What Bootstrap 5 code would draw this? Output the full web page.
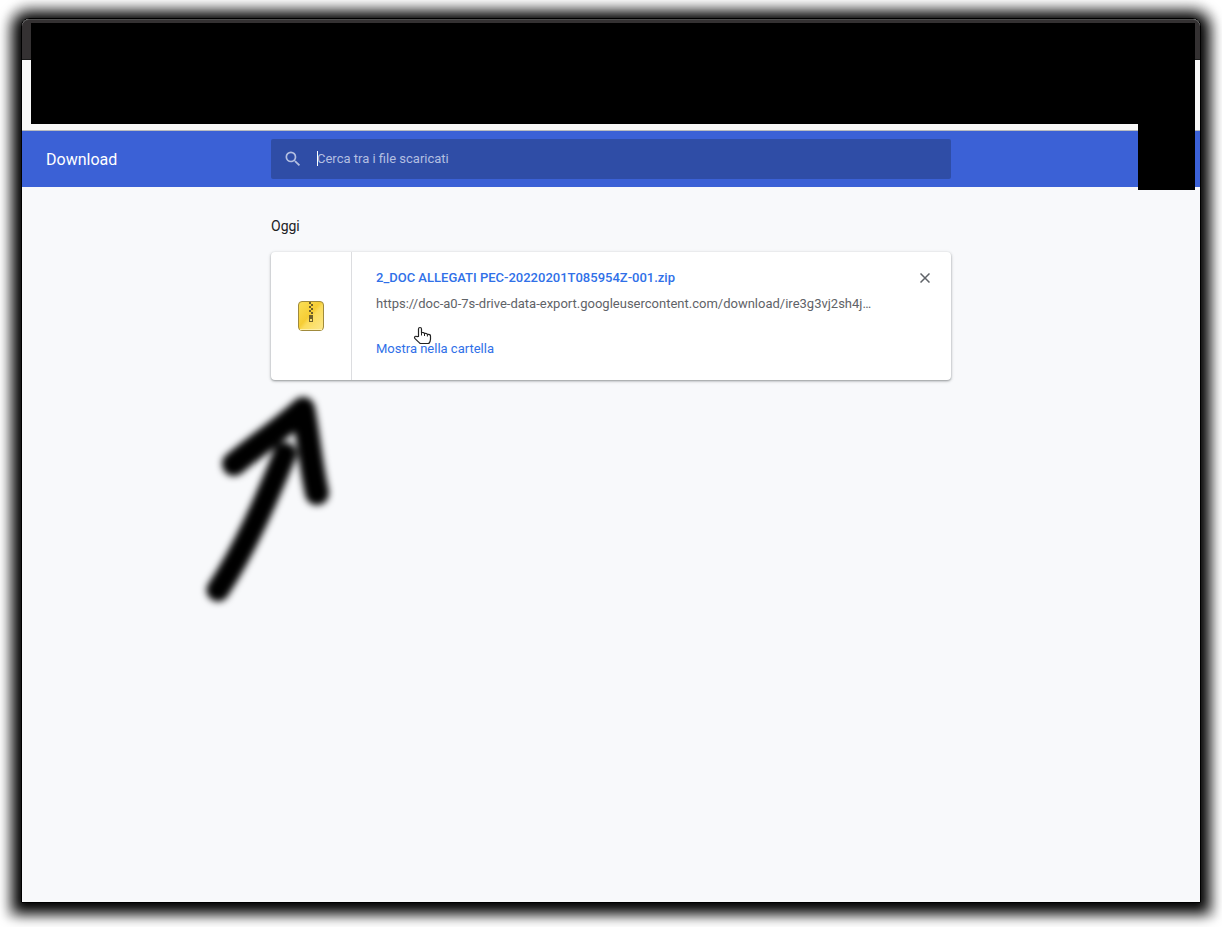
<!DOCTYPE html>
<html lang="it">
<head>
<meta charset="utf-8">
<meta name="viewport" content="width=device-width, initial-scale=1">
<title>Download</title>
<link rel="stylesheet" href="https://cdn.jsdelivr.net/npm/bootstrap@5.3.0/dist/css/bootstrap.min.css">
<style>
body { font-family: Roboto, "Liberation Sans", sans-serif; font-size: 13px; line-height: 20px; background: #fff; padding: 18px 21px 24px; color: #202124; }
.window { background: #f8f9fb; border: 1px solid #000; border-radius: 8px 8px 0 0; box-shadow: 0 2px 14px 9px #000, 0 0 6px 16px #f4f4f4; }
.tab-strip { height: 41px; background: #343132; border-top: 1px solid #4c4c4c; border-bottom: 1px solid #1c1c1c; border-radius: 7px 7px 0 0; }
.address-bar { height: 71px; background: #f8f8f8; border-bottom: 1px solid #b9bcc0; }
.cover { background: #000; }
.cover-top { top: 4px; left: 9px; right: 5px; height: 101px; }
.cover-side { top: 105px; right: 5px; width: 57px; height: 66px; }
.app-bar { height: 56px; background: #3b61d6; }
.app-bar-side { flex: 1 1 0; min-width: 0; }
.app-title { font-size: 16px; line-height: 20px; padding: 2px 0 0 24px; }
.column-680 { width: 680px; max-width: 100%; }
.search-box { height: 40px; background: #2f4da6; border-radius: 2px; padding-left: 12px; }
.search-box input { font-size: 13px; color: #fff; outline: 0; }
.search-box input::placeholder { color: #b3bfe1; opacity: 1; }
.search-field { margin-left: 14px; }
.caret { left: 0; top: 2px; width: 1px; height: 15px; background: #fff; }
.day { font-size: 14px; line-height: 20px; margin: 29px 0 16px; }
.item { min-height: 128px; background: #fff; border-radius: 4px; box-shadow: 0 1px 2px rgba(60,64,67,.4), 0 1px 3px 1px rgba(60,64,67,.15); }
.thumb { width: 81px; border-right: 1px solid #dcdde0; }
.details { padding: 16px 24px 20px; }
.details a { color: #3070e8; }
.file-name { font-weight: 500; }
.url { color: #5f6368; margin-top: 6px; }
.show { margin-top: 25px; }
.close-btn { width: 20px; height: 20px; margin: 16px 16px 0 0; }
.pointer { left: 142px; top: 74px; }
.arrow { left: -81px; top: 128px; }
</style>
</head>
<body class="min-vh-100 d-flex flex-column">
<div class="window position-relative flex-grow-1 d-flex flex-column">
  <div class="tab-strip"></div>
  <div class="address-bar"></div>
  <header class="app-bar d-flex align-items-center text-white">
    <div class="app-bar-side"><h1 class="app-title fw-normal m-0">Download</h1></div>
    <div class="search-box column-680 flex-shrink-0 d-flex align-items-center">
      <svg width="20" height="20" viewBox="0 0 24 24" fill="#b3bfe1" aria-hidden="true"><path d="M15.500 14h-.79l-.28-.27A6.470 6.470 0 0 0 16 9.500 6.500 6.500 0 1 0 9.500 16c1.610 0 3.090-.59 4.230-1.570l.27.28v.79l5 4.990L20.490 19l-4.990-5zm-6 0C7.010 14 5 11.990 5 9.500S7.010 5 9.500 5 14 7.010 14 9.500 11.990 14 9.500 14z"/></svg>
      <div class="search-field position-relative flex-grow-1">
        <input class="d-block w-100 border-0 bg-transparent p-0" type="text" placeholder="Cerca tra i file scaricati" aria-label="Cerca tra i file scaricati">
        <span class="caret position-absolute"></span>
      </div>
    </div>
    <div class="app-bar-side"></div>
  </header>
  <main class="column-680 mx-auto">
    <h2 class="day fw-normal">Oggi</h2>
    <article class="item position-relative d-flex">
      <div class="thumb flex-shrink-0 d-flex align-items-center justify-content-center">
        <svg width="26" height="30" viewBox="0 0 26 30" aria-hidden="true">
          <defs><linearGradient id="gold" x1="0" y1="0" x2="1" y2="1"><stop offset="0" stop-color="#fae058"/><stop offset=".45" stop-color="#f6cd35"/><stop offset=".55" stop-color="#fbdc5c"/><stop offset="1" stop-color="#fce88c"/></linearGradient></defs>
          <rect x=".5" y=".5" width="25" height="29" rx="3.500" fill="url(#gold)" stroke="#a08a3c"/>
          <path d="M2 28.500h22" stroke="#fff0a8"/>
          <path fill="#6e5f2b" d="M11 1h2v2h-2zM13 3h2v2h-2zM11 5h2v2h-2zM13 7h2v2h-2zM11 9h2v2h-2zM13 11h2v2h-2zM11 14h4v7h-4z"/>
          <path fill="#f7df75" d="M12 18h2v2h-2z"/>
        </svg>
      </div>
      <div class="details flex-grow-1 overflow-hidden">
        <a class="file-name d-block text-decoration-none text-truncate" href="#">2_DOC ALLEGATI PEC-20220201T085954Z-001.zip</a>
        <div class="url text-truncate">https://doc-a0-7s-drive-data-export.googleusercontent.com/download/ire3g3vj2sh4j…</div>
        <div class="show"><a class="text-decoration-none" href="#">Mostra nella cartella</a></div>
      </div>
      <button class="close-btn flex-shrink-0 d-flex align-items-center justify-content-center border-0 bg-transparent p-0" type="button" aria-label="Rimuovi dall'elenco">
        <svg width="10" height="10" viewBox="0 0 10 10" stroke="#5f6368" stroke-width="1.500"><path d="M.5.5l9 9M9.500.5l-9 9"/></svg>
      </button>
      <svg class="pointer position-absolute" width="20" height="20" viewBox="0 0 20 20" aria-hidden="true">
        <path d="M5.500 10.500V3C5.500 1 8.500 1 8.500 3V6.800c1.600-.6 2.700-.2 3 .7 1.500-.4 2.600 0 2.900.9 1.900-.4 3.100.4 3.100 1.800v3c0 2-.8 3.200-1.700 4.300H7.200C5.700 16 3.700 14.500 1.800 12.300c-1-1.500.8-2.600 2.200-1.700z" fill="#fff" stroke="#222" stroke-width="1.200" stroke-linejoin="round"/>
        <path d="M8.500 7v2.500M11.500 7.800v2.200M14.400 8.700v1.800" stroke="#222" stroke-width="1"/>
      </svg>
      <svg class="arrow position-absolute" width="160" height="240" viewBox="0 0 160 240" aria-hidden="true">
        <defs><filter id="soft" x="-20%" y="-20%" width="140%" height="140%"><feGaussianBlur stdDeviation="3.800"/></filter></defs>
        <g filter="url(#soft)" fill="none" stroke="#000" stroke-width="24" stroke-linecap="round" stroke-linejoin="round">
          <path d="M44 84C68 64 90 50 113 29C118 52 120 82 127 113"/>
          <path d="M95 74C76 120 55 169 28 210" stroke-width="23"/>
        </g>
      </svg>
    </article>
  </main>
  <div class="cover cover-top position-absolute"></div>
  <div class="cover cover-side position-absolute"></div>
</div>
<script src="https://cdn.jsdelivr.net/npm/bootstrap@5.3.0/dist/js/bootstrap.bundle.min.js"></script>
</body>
</html>
